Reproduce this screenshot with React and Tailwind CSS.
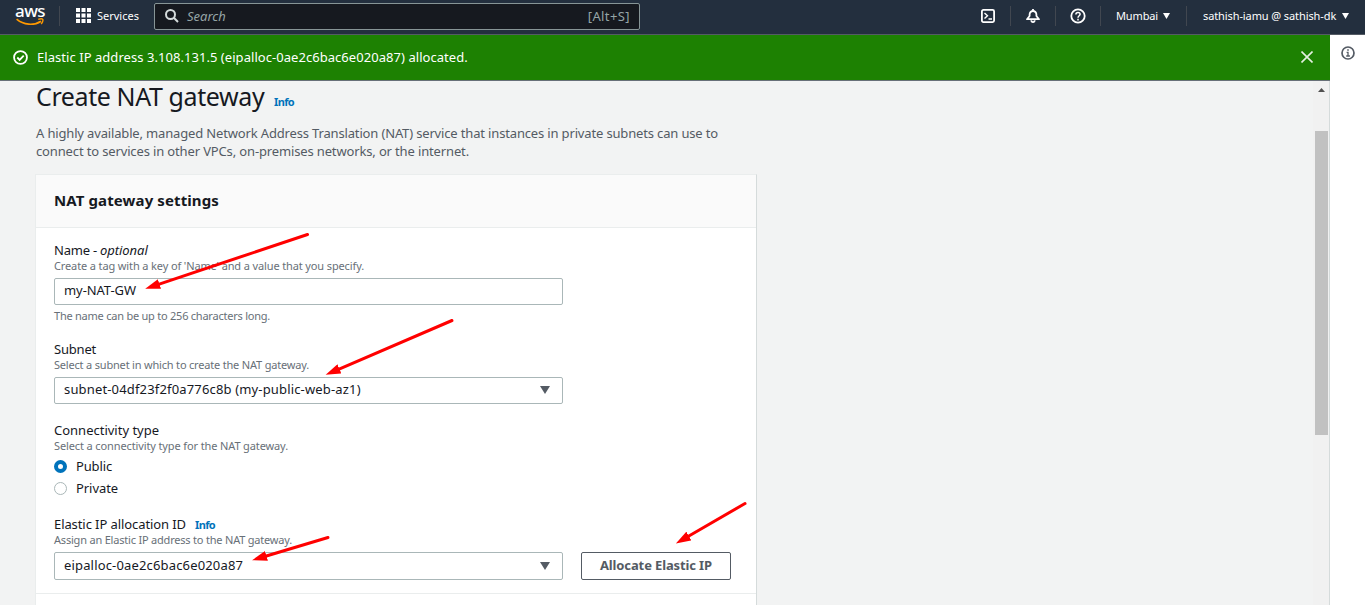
function Caret({ className }) {
  return (
    <svg viewBox="0 0 10 8" className={className} fill="currentColor" preserveAspectRatio="none" aria-hidden="true">
      <path d="M0 0h10L5 8z" />
    </svg>
  );
}

function Divider() {
  return <span className="h-5 w-px shrink-0 bg-[#414750]" />;
}

function AwsLogo() {
  return (
    <span className="flex w-7 flex-col items-center">
      <span className="h-3 text-[17px] leading-[9px] font-medium tracking-[-0.6px] text-white">aws</span>
      <svg viewBox="0 0 28 8" className="h-2 w-7" fill="none" stroke="#f90" aria-hidden="true">
        <path d="M.6 1.200C7.500 7.200 18 7.800 25 3.200" strokeWidth="1.700" />
        <path d="M22.200 1.400c2-.7 4-.7 4.600 0 .4 1-.4 3-1.600 4.600" strokeWidth="1.400" />
      </svg>
    </span>
  );
}

function TopBar() {
  return (
    <header className="flex h-[35px] shrink-0 items-center border-b border-[#545b64] bg-[#232f3e] pb-[3px] text-[11px] text-white">
      <div className="flex w-[59px] shrink-0 justify-end pr-[15px]">
        <AwsLogo />
      </div>
      <Divider />
      <svg viewBox="0 0 15 15" className="ml-4 h-[15px] w-[15px]" fill="#fff" aria-hidden="true">
        <path d="M0 0h4v4H0zM5.500 0h4v4h-4zM11 0h4v4h-4zM0 5.500h4v4H0zM5.500 5.500h4v4h-4zM11 5.500h4v4h-4zM0 11h4v4H0zM5.500 11h4v4h-4zM11 11h4v4h-4z" />
      </svg>
      <span className="ml-[6px] w-[57px]">Services</span>
      <div className="mt-px flex h-[27px] w-[486px] items-center rounded-[2px] border border-[#879596] bg-[#16191f] pr-[9px] pb-px pl-[10px] text-[13px] text-[#95a5a6]">
        <svg viewBox="0 0 14 14" className="h-[14px] w-[14px]" fill="none" stroke="#d5dbdb" strokeWidth="2" aria-hidden="true">
          <circle cx="5.500" cy="5.500" r="4.500" />
          <path d="M8.800 8.800l4.200 4.200" />
        </svg>
        <span className="ml-2 grow italic">Search</span>
        <span className="text-[13px] tracking-[0.4px]">[Alt+S]</span>
      </div>
      <div className="ml-auto flex items-center">
        <svg viewBox="0 0 16 16" className="mr-[14px] h-4 w-4" fill="none" stroke="#fff" strokeWidth="1.800" aria-hidden="true">
          <rect x="1.900" y="1.900" width="12.200" height="12.200" rx="1.500" />
          <path d="M4.500 5l3 2.800-3 2.800M8.500 11h3.500" strokeWidth="1.400" />
        </svg>
        <Divider />
        <svg viewBox="0 0 16 16" className="mr-[14px] ml-[14px] h-4 w-4" fill="none" stroke="#fff" strokeWidth="1.800" strokeLinejoin="round" aria-hidden="true">
          <path d="M8 1v2M8 3a3.400 3.400 0 0 0-3.400 3.400V8L2 11.200h12L11.400 8V6.400A3.400 3.400 0 0 0 8 3zM6.300 12.200c.2 2.600 3.200 2.600 3.400 0" />
        </svg>
        <Divider />
        <svg viewBox="0 0 16 16" className="mr-[14px] ml-[14px] h-4 w-4" fill="none" stroke="#fff" strokeWidth="1.800" aria-hidden="true">
          <circle cx="8" cy="8" r="6.700" />
          <path d="M5.900 6.500c0-2.800 4.300-2.700 4.200-.2C10.100 7.800 8 7.700 8 9.700M8 10.700v1.700" strokeWidth="1.500" />
        </svg>
        <Divider />
        <span className="ml-[15px] w-[47px] tracking-[-0.13px]">Mumbai</span>
        <Caret className="mr-4 h-[6px] w-[7px]" />
        <Divider />
        <span className="ml-4 w-[139px] tracking-[-0.1px]">sathish-iamu @ sathish-dk</span>
        <Caret className="mr-4 h-[6px] w-[7px]" />
      </div>
    </header>
  );
}

function SuccessBanner() {
  return (
    <div className="flex h-[46px] shrink-0 items-center border-b border-[#687078] bg-[#1d8102] pr-[17px] pb-px pl-[13px] text-white">
      <svg viewBox="0 0 14 14" className="h-[15px] w-[15px]" fill="none" stroke="#fff" strokeWidth="1.700" aria-hidden="true">
        <circle cx="7" cy="7" r="6" />
        <path d="M4 7l2.200 2.200L10 5.300" />
      </svg>
      <p className="ml-[9px] grow pb-px text-[13px] tracking-[0.05px]">
        Elastic IP address 3.108.131.5 (eipalloc-0ae2c6bac6e020a87) allocated.
      </p>
      <svg viewBox="0 0 12 12" className="h-3 w-3" fill="none" stroke="#e4f0e0" strokeWidth="1.600" aria-hidden="true">
        <path d="M.5.500l11 11M11.500.500l-11 11" />
      </svg>
    </div>
  );
}

function Select({ className, children }) {
  return (
    <div className={`flex w-[509px] items-center justify-between rounded-[2px] border border-[#aab7b8] bg-white pr-3 pl-[9px] ${className}`}>
      <span className="tracking-[0.16px]">{children}</span>
      <Caret className="mt-[2px] h-2 w-[10px] text-[#545b64]" />
    </div>
  );
}

function Hint({ className, children }) {
  return <p className={`h-4 text-[11px] leading-4 text-[#687078] ${className}`}>{children}</p>;
}

function Arrows() {
  return (
    <svg viewBox="0 0 1365 605" className="pointer-events-none absolute inset-0 h-full w-full" fill="none" stroke="#f00" strokeWidth="3" strokeLinecap="round" aria-hidden="true">
      <defs>
        <marker id="tip" viewBox="0 0 15 10" refX="1" refY="5" markerWidth="15" markerHeight="10" markerUnits="userSpaceOnUse" orient="auto">
          <path d="M0 0l15 5-15 5z" fill="#f00" stroke="none" />
        </marker>
      </defs>
      <path d="M307.500 234.500L158.500 284.300" markerEnd="url(#tip)" />
      <path d="M452 320.500L338.500 369.300" markerEnd="url(#tip)" />
      <path d="M328 537.500L265.500 556.200" markerEnd="url(#tip)" />
      <path d="M745 503.500L688 536.500" markerEnd="url(#tip)" />
    </svg>
  );
}

export default function App() {
  return (
    <div className="relative flex h-[605px] w-[1365px] flex-col overflow-hidden bg-white font-['Noto_Sans',sans-serif] text-[13px] leading-[18px] whitespace-nowrap text-[#16191f]">
      <TopBar />
      <div className="flex min-h-0 grow">
        <div className="flex w-[1330px] shrink-0 flex-col">
          <SuccessBanner />
          <div className="flex min-h-0 grow bg-[#f2f3f3]">
            <main className="w-[1313px] pl-9">
              <div className="flex h-[34px] items-baseline">
                <h1 className="w-[238px] text-[25px] leading-[31px] tracking-[-0.4px]">Create NAT gateway</h1>
                <a className="text-[11px] font-bold tracking-[-0.64px] text-[#0073bb]">Info</a>
              </div>
              <div className="mt-[9px] text-[#545b64]">
                <p className="tracking-[-0.156px]">
                  A highly available, managed Network Address Translation (NAT) service that instances in private subnets can use to
                </p>
                <p className="tracking-[-0.142px]">
                  connect to services in other VPCs, on-premises networks, or the internet.
                </p>
              </div>
              <section className="-ml-px mt-[14px] h-[500px] w-[722px] border border-t-[#eaeded] border-r-[#d5dbdb] border-l-[#eaeded] bg-white">
                <div className="flex h-[53px] items-center border-b border-[#eaeded] bg-[#fafafa] pb-[3px] pl-[18px]">
                  <h2 className="text-[15px] font-bold tracking-[0.11px]">NAT gateway settings</h2>
                </div>
                <div className="h-[366px] border-b border-[#eaeded] pt-[13px] pl-[18px]">
                  <p className="h-4">
                    <span className="tracking-[-0.23px]">Name - </span>
                    <em className="tracking-[-0.05px]">optional</em>
                  </p>
                  <Hint className="mt-px tracking-[-0.127px]">
                    Create a tag with a key of 'Name' and a value that you specify.
                  </Hint>
                  <div className="mt-1 flex h-[27px] w-[509px] items-center rounded-[2px] border border-[#aab7b8] pb-[3px] pl-[9px] tracking-[-0.078px]">
                    my-NAT-GW
                  </div>
                  <Hint className="mt-[3px] tracking-[-0.233px]">
                    The name can be up to 256 characters long.
                  </Hint>

                  <p className="mt-4 h-4 tracking-[-0.2px]">Subnet</p>
                  <Hint className="mt-px mb-1 tracking-[-0.188px]">
                    Select a subnet in which to create the NAT gateway.
                  </Hint>
                  <Select className="h-[27px] pb-[3px]">subnet-04df23f2f0a776c8b (my-public-web-az1)</Select>

                  <p className="mt-[17px] h-4">Connectivity type</p>
                  <Hint className="mt-px tracking-[-0.12px]">Select a connectivity type for the NAT gateway.</Hint>
                  <div className="mt-1 flex h-[22px] gap-[9px]">
                    <span className="mt-[2px] h-[13px] w-[13px] rounded-full border-4 border-[#0073bb] bg-white" />
                    <span className="-mt-px tracking-[-0.14px]">Public</span>
                  </div>
                  <div className="flex h-[22px] gap-[9px]">
                    <span className="mt-[2px] h-[13px] w-[13px] rounded-full border border-[#aab7b8] bg-white" />
                    <span className="-mt-px tracking-[-0.07px]">Private</span>
                  </div>

                  <p className="mt-[13px] h-4">
                    <span className="inline-block w-[141px] tracking-[-0.085px]">Elastic IP allocation ID</span>
                    <a className="text-[11px] font-bold tracking-[-0.64px] text-[#0073bb]">Info</a>
                  </p>
                  <Hint className="mt-px mb-1 tracking-[-0.2px]">Assign an Elastic IP address to the NAT gateway.</Hint>
                  <div className="flex gap-[18px]">
                    <Select className="h-7 pb-[2px]">eipalloc-0ae2c6bac6e020a87</Select>
                    <button className="h-7 w-[150px] rounded-[2px] border border-[#545b64] bg-white pb-[2px] font-bold tracking-[-0.125px] text-[#545b64]">
                      Allocate Elastic IP
                    </button>
                  </div>
                </div>
              </section>
            </main>
            <div className="flex w-4 flex-col items-center bg-[#f1f1f1] pt-[7px]">
              <Caret className="h-1 w-[7px] rotate-180 text-[#505050]" />
              <span className="mt-[39px] h-[304px] w-[13px] bg-[#c1c1c1]" />
            </div>
            <span className="w-px bg-[#d5dbdb]" />
          </div>
        </div>
        <aside className="flex w-[35px] justify-center pt-[11px]">
          <svg viewBox="0 0 14 14" className="h-[14px] w-[14px]" fill="none" stroke="#545b64" strokeWidth="1.700" aria-hidden="true">
            <circle cx="7" cy="7" r="6" />
            <path d="M5.600 6.300H7v3.500M5.200 10h3.700M6.200 4h1.600" strokeWidth="1.300" />
          </svg>
        </aside>
      </div>
      <Arrows />
    </div>
  );
}
